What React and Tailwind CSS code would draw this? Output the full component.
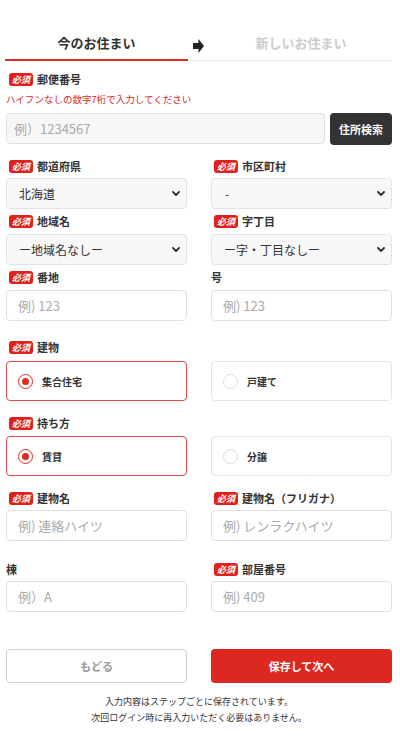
import React from "react";

const Badge = () => (
  <span className="ml-[3px] mr-[4px] inline-flex h-[13px] w-[24px] items-center justify-center rounded-[3px] bg-[#e0201b] text-[9px] font-bold italic leading-none text-white">
    必須
  </span>
);

const Label = ({ req, children, className = "" }) => (
  <div className={"flex h-[14px] items-center text-[11px] font-bold leading-none text-[#333] " + className}>
    {req && <Badge />}
    <span>{children}</span>
  </div>
);

const Chevron = () => (
  <svg width="8" height="5" viewBox="0 0 8 5" className="shrink-0">
    <path d="M1 1 L4 4 L7 1" fill="none" stroke="#333" strokeWidth="1.8" strokeLinecap="round" strokeLinejoin="round" />
  </svg>
);

const Select = ({ value, className = "" }) => (
  <div className={"flex h-[31px] items-center justify-between rounded-[4px] border border-[#e3e3e3] bg-[#f8f8f8] pl-[12px] pr-[6px] text-[12px] text-[#333] " + className}>
    <span>{value}</span>
    <Chevron />
  </div>
);

const Input = ({ ph, className = "" }) => (
  <div className={"flex h-[31px] items-center rounded-[4px] border border-[#e0e0e0] bg-white pl-[11px] text-[13px] text-[#aaa] " + className}>
    {ph}
  </div>
);

const Radio = ({ label, checked }) => (
  <div
    className={
      "flex h-[40px] items-center rounded-[4px] border bg-white pl-[11px] " +
      (checked ? "border-[#e04848]" : "border-[#e5e5e5]")
    }
  >
    {checked ? (
      <span className="flex h-[15px] w-[15px] items-center justify-center rounded-full border-[1.5px] border-[#e02a22]">
        <span className="h-[7px] w-[7px] rounded-full bg-[#e02a22]" />
      </span>
    ) : (
      <span className="h-[15px] w-[15px] rounded-full border-[1.5px] border-[#dcdcdc]" />
    )}
    <span className="ml-[9px] text-[10px] font-bold text-[#333]">{label}</span>
  </div>
);

export default function App() {
  return (
    <div className="h-[750px] w-[400px] bg-white font-['Noto_Sans_CJK_JP','Noto_Sans',sans-serif] text-[#333]">
      {/* Tabs */}
      <div className="flex items-end pl-[5px] pr-[8px]">
        <div className="w-[183px] border-b-2 border-[#dc2a22] pb-[6px] pt-[33px] text-center text-[13px] font-bold leading-[20px] text-[#333]">
          今のお住まい
        </div>
        <div className="flex h-[61px] w-[22px] items-start border-b border-[#e8e8e8] pl-[5px] pt-[39px]">
          <svg width="11" height="14" viewBox="0 0 11 14">
            <rect x="0" y="4" width="6" height="6" fill="#222" />
            <path d="M5.5 0 L11 7 L5.5 14 Z" fill="#222" />
          </svg>
        </div>
        <div className="flex-1 border-b border-[#e8e8e8] pb-[7px] pt-[33px] text-center text-[13px] font-bold leading-[20px] text-[#cccccc]">
          新しいお住まい
        </div>
      </div>

      <div className="pl-[6px] pr-[8px]">
        {/* Postal */}
        <Label req className="mt-[11px]">郵便番号</Label>
        <div className="mt-[6px] h-[14px] text-[9.5px] leading-[14px] text-[#d9261c]">
          ハイフンなしの数字7桁で入力してください
        </div>
        <div className="mt-[7px] flex gap-[5px]">
          <div className="flex h-[31px] flex-1 items-center rounded-[4px] border border-[#e0e0e0] bg-[#f7f7f7] pl-[7px] text-[13px] text-[#aaa]">
            例）1234567
          </div>
          <div className="flex h-[32px] w-[62px] items-center justify-center rounded-[4px] bg-[#333333] text-[11px] font-bold text-white">
            住所検索
          </div>
        </div>

        {/* Pref / City */}
        <div className="mt-[14px] grid grid-cols-2 gap-x-[24px]">
          <div>
            <Label req>都道府県</Label>
            <Select value="北海道" className="mt-[5px]" />
            <Label req className="mt-[5px]">地域名</Label>
            <Select value="ー地域名なしー" className="mt-[6px]" />
            <Label req className="mt-[5px]">番地</Label>
            <Input ph="例) 123" className="mt-[6px]" />
          </div>
          <div>
            <Label req>市区町村</Label>
            <Select value="-" className="mt-[5px] pl-[13px]" />
            <Label req className="mt-[5px]">字丁目</Label>
            <Select value="ー字・丁目なしー" className="mt-[6px]" />
            <Label className="mt-[5px]">号</Label>
            <Input ph="例) 123" className="mt-[6px]" />
          </div>
        </div>

        {/* Building type */}
        <Label req className="mt-[19px]">建物</Label>
        <div className="mt-[7px] grid grid-cols-2 gap-x-[24px]">
          <Radio label="集合住宅" checked />
          <Radio label="戸建て" />
        </div>

        <Label req className="mt-[15px]">持ち方</Label>
        <div className="mt-[6px] grid grid-cols-2 gap-x-[24px]">
          <Radio label="賃貸" checked />
          <Radio label="分譲" />
        </div>

        <div className="mt-[15px] grid grid-cols-2 gap-x-[24px]">
          <div>
            <Label req>建物名</Label>
            <Input ph="例) 連絡ハイツ" className="mt-[5px]" />
            <Label className="mt-[21px]">棟</Label>
            <Input ph="例）A" className="mt-[5px]" />
          </div>
          <div>
            <Label req>建物名（フリガナ）</Label>
            <Input ph="例) レンラクハイツ" className="mt-[5px]" />
            <Label req className="mt-[21px]">部屋番号</Label>
            <Input ph="例) 409" className="mt-[5px]" />
          </div>
        </div>

        {/* Buttons */}
        <div className="mt-[37px] grid grid-cols-2 gap-x-[24px]">
          <div className="flex h-[34px] items-center justify-center rounded-[4px] border border-[#d0d0d0] bg-white text-[11px] font-bold text-[#999]">
            もどる
          </div>
          <div className="flex h-[34px] items-center justify-center rounded-[4px] bg-[#dc2820] text-[11px] font-bold text-white">
            保存して次へ
          </div>
        </div>

        <div className="mt-[11px] text-center text-[9px] leading-[16px] text-[#333]">
          <div>入力内容はステップごとに保存されています。</div>
          <div>次回ログイン時に再入力いただく必要はありません。</div>
        </div>
      </div>
    </div>
  );
}
